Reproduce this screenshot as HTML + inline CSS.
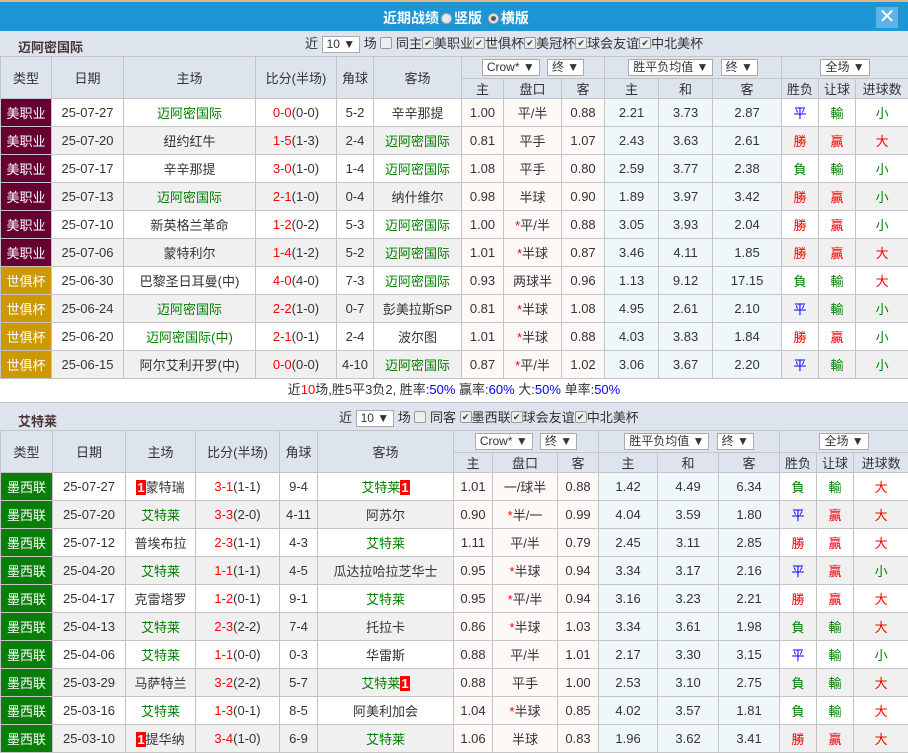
<!DOCTYPE html>
<html><head><meta charset="utf-8">
<style>
*{margin:0;padding:0;box-sizing:border-box}
body{width:908px;height:753px;overflow:hidden;background:#fff;font-family:"Liberation Sans","Noto Sans CJK SC",sans-serif;font-size:13px;color:#333;position:relative}
.title{position:absolute;left:0;top:0;width:908px;height:31px;background:#1d96d6;border-top:2px solid #d9b98a;color:#fff;font-weight:bold;font-size:14px}
.title .t{position:absolute;left:383px;top:6px;white-space:nowrap}
.radio{display:inline-block;width:11px;height:11px;border-radius:50%;background:#e8e8e8;border:1px solid #aaa;vertical-align:-1px;margin:0 2px}
.radio.on{background:radial-gradient(circle,#555 0,#555 2px,#e8e8e8 3px)}
.close{position:absolute;left:876px;top:5px;width:22px;height:21px;background:#5cb3e6;color:#fff;font-size:20px;line-height:20px;text-align:center;font-weight:normal}
.bar{position:absolute;left:0;width:908px;background:#dde4ee;border-bottom:1px solid #c0c0c0}
.bar .n{position:absolute;left:18px;font-weight:bold;color:#4a3333;font-size:13px}
.bar .c{position:absolute;white-space:nowrap;line-height:17px}
.sel{display:inline-block;background:#fff;border:1px solid #aaa;height:17px;line-height:15px;padding:0 4px;font-size:12px;vertical-align:middle}
.cb{display:inline-block;width:12px;height:12px;border:1px solid #999;border-radius:2px;background:#eee;vertical-align:middle;font-size:9px;line-height:10px;text-align:center;color:#333;margin-top:-4px}
table{position:absolute;left:0;border-collapse:collapse;table-layout:fixed;width:908px}
td{border:1px solid #c4c4c4;text-align:center;white-space:nowrap;overflow:hidden;padding:0}
tr.d td{height:28px}
tr.g td{background:#f0f0f0}
tr.h td{background:#dde4ee}
td.a{background:#fdf9f6 !important}
td.b{background:#eff7fb !important}
td.m{background:#660033 !important;color:#fff}
td.w{background:#cc9900 !important;color:#fff}
td.x{background:#0b7d0b !important;color:#fff}
.gr{color:#008000}.r{color:#f00}.bl{color:#00f}
.one{background:#f00;color:#fff;font-weight:bold;padding:0 1px}
.st{color:#f00}
.sum{position:absolute;left:0;top:377px;width:908px;height:26px;line-height:25px;text-align:center;border-bottom:1px solid #c0c0c0;padding-left:0}
</style></head><body>
<div class="title"><span class="t">近期战绩<span class="radio"></span>竖版 <span class="radio on"></span>横版</span><div class="close">✕</div></div>

<div class="bar" style="top:31px;height:26px"><span class="n" style="top:6px">迈阿密国际</span>
<span class="c" style="left:305px;top:4px">近 <span class="sel">10 ▼</span> 场 <span class="cb"></span> 同主<span class="cb">✔</span>美职业<span class="cb">✔</span>世俱杯<span class="cb">✔</span>美冠杯<span class="cb">✔</span>球会友谊<span class="cb">✔</span>中北美杯</span></div>

<table style="top:56px">
<colgroup><col style="width:51px"><col style="width:72px"><col style="width:132px"><col style="width:81px"><col style="width:37px"><col style="width:88px"><col style="width:42px"><col style="width:58px"><col style="width:43px"><col style="width:54px"><col style="width:54px"><col style="width:69px"><col style="width:37px"><col style="width:37px"><col style="width:53px"></colgroup>
<tr class="h"><td rowspan="2" style="height:38px">类型</td><td rowspan="2">日期</td><td rowspan="2">主场</td><td rowspan="2">比分(半场)</td><td rowspan="2">角球</td><td rowspan="2">客场</td><td colspan="3" style="height:22px"><span class="sel">Crow* ▼</span> &nbsp;<span class="sel">终 ▼</span></td><td colspan="3"><span class="sel">胜平负均值 ▼</span> &nbsp;<span class="sel">终 ▼</span></td><td colspan="3"><span class="sel">全场 ▼</span></td></tr>
<tr class="h"><td style="height:16px">主</td><td>盘口</td><td>客</td><td>主</td><td>和</td><td>客</td><td>胜负</td><td>让球</td><td>进球数</td></tr>
<tr class="d"><td class="m">美职业</td><td>25-07-27</td><td class="gr">迈阿密国际</td><td><span class="r">0-0</span>(0-0)</td><td>5-2</td><td>辛辛那提</td><td class="a">1.00</td><td class="a">平/半</td><td class="a">0.88</td><td class="b">2.21</td><td class="b">3.73</td><td class="b">2.87</td><td class="bl">平</td><td class="gr">輸</td><td class="gr">小</td></tr>
<tr class="d g"><td class="m">美职业</td><td>25-07-20</td><td>纽约红牛</td><td><span class="r">1-5</span>(1-3)</td><td>2-4</td><td class="gr">迈阿密国际</td><td class="a">0.81</td><td class="a">平手</td><td class="a">1.07</td><td class="b">2.43</td><td class="b">3.63</td><td class="b">2.61</td><td class="r">勝</td><td class="r">贏</td><td class="r">大</td></tr>
<tr class="d"><td class="m">美职业</td><td>25-07-17</td><td>辛辛那提</td><td><span class="r">3-0</span>(1-0)</td><td>1-4</td><td class="gr">迈阿密国际</td><td class="a">1.08</td><td class="a">平手</td><td class="a">0.80</td><td class="b">2.59</td><td class="b">3.77</td><td class="b">2.38</td><td class="gr">負</td><td class="gr">輸</td><td class="gr">小</td></tr>
<tr class="d g"><td class="m">美职业</td><td>25-07-13</td><td class="gr">迈阿密国际</td><td><span class="r">2-1</span>(1-0)</td><td>0-4</td><td>纳什维尔</td><td class="a">0.98</td><td class="a">半球</td><td class="a">0.90</td><td class="b">1.89</td><td class="b">3.97</td><td class="b">3.42</td><td class="r">勝</td><td class="r">贏</td><td class="gr">小</td></tr>
<tr class="d"><td class="m">美职业</td><td>25-07-10</td><td>新英格兰革命</td><td><span class="r">1-2</span>(0-2)</td><td>5-3</td><td class="gr">迈阿密国际</td><td class="a">1.00</td><td class="a"><span class="st">*</span>平/半</td><td class="a">0.88</td><td class="b">3.05</td><td class="b">3.93</td><td class="b">2.04</td><td class="r">勝</td><td class="r">贏</td><td class="gr">小</td></tr>
<tr class="d g"><td class="m">美职业</td><td>25-07-06</td><td>蒙特利尔</td><td><span class="r">1-4</span>(1-2)</td><td>5-2</td><td class="gr">迈阿密国际</td><td class="a">1.01</td><td class="a"><span class="st">*</span>半球</td><td class="a">0.87</td><td class="b">3.46</td><td class="b">4.11</td><td class="b">1.85</td><td class="r">勝</td><td class="r">贏</td><td class="r">大</td></tr>
<tr class="d"><td class="w">世俱杯</td><td>25-06-30</td><td>巴黎圣日耳曼(中)</td><td><span class="r">4-0</span>(4-0)</td><td>7-3</td><td class="gr">迈阿密国际</td><td class="a">0.93</td><td class="a">两球半</td><td class="a">0.96</td><td class="b">1.13</td><td class="b">9.12</td><td class="b">17.15</td><td class="gr">負</td><td class="gr">輸</td><td class="r">大</td></tr>
<tr class="d g"><td class="w">世俱杯</td><td>25-06-24</td><td class="gr">迈阿密国际</td><td><span class="r">2-2</span>(1-0)</td><td>0-7</td><td>彭美拉斯SP</td><td class="a">0.81</td><td class="a"><span class="st">*</span>半球</td><td class="a">1.08</td><td class="b">4.95</td><td class="b">2.61</td><td class="b">2.10</td><td class="bl">平</td><td class="gr">輸</td><td class="gr">小</td></tr>
<tr class="d"><td class="w">世俱杯</td><td>25-06-20</td><td class="gr">迈阿密国际(中)</td><td><span class="r">2-1</span>(0-1)</td><td>2-4</td><td>波尔图</td><td class="a">1.01</td><td class="a"><span class="st">*</span>半球</td><td class="a">0.88</td><td class="b">4.03</td><td class="b">3.83</td><td class="b">1.84</td><td class="r">勝</td><td class="r">贏</td><td class="gr">小</td></tr>
<tr class="d g"><td class="w">世俱杯</td><td>25-06-15</td><td>阿尔艾利开罗(中)</td><td><span class="r">0-0</span>(0-0)</td><td>4-10</td><td class="gr">迈阿密国际</td><td class="a">0.87</td><td class="a"><span class="st">*</span>平/半</td><td class="a">1.02</td><td class="b">3.06</td><td class="b">3.67</td><td class="b">2.20</td><td class="bl">平</td><td class="gr">輸</td><td class="gr">小</td></tr>
</table>

<div class="sum">近<span class="r">10</span>场,胜5平3负2, 胜率:<span class="bl">50%</span> 赢率:<span class="bl">60%</span> 大:<span class="bl">50%</span> 单率:<span class="bl">50%</span></div>

<div class="bar" style="top:403px;height:28px"><span class="n" style="top:8px">艾特莱</span>
<span class="c" style="left:339px;top:6px">近 <span class="sel">10 ▼</span> 场 <span class="cb"></span> 同客 <span class="cb">✔</span>墨西联<span class="cb">✔</span>球会友谊<span class="cb">✔</span>中北美杯</span></div>

<table style="top:430px">
<colgroup><col style="width:52px"><col style="width:73px"><col style="width:70px"><col style="width:84px"><col style="width:38px"><col style="width:136px"><col style="width:39px"><col style="width:65px"><col style="width:41px"><col style="width:59px"><col style="width:61px"><col style="width:61px"><col style="width:37px"><col style="width:37px"><col style="width:55px"></colgroup>
<tr class="h"><td rowspan="2" style="height:38px">类型</td><td rowspan="2">日期</td><td rowspan="2">主场</td><td rowspan="2">比分(半场)</td><td rowspan="2">角球</td><td rowspan="2">客场</td><td colspan="3" style="height:22px"><span class="sel">Crow* ▼</span> &nbsp;<span class="sel">终 ▼</span></td><td colspan="3"><span class="sel">胜平负均值 ▼</span> &nbsp;<span class="sel">终 ▼</span></td><td colspan="3"><span class="sel">全场 ▼</span></td></tr>
<tr class="h"><td style="height:16px">主</td><td>盘口</td><td>客</td><td>主</td><td>和</td><td>客</td><td>胜负</td><td>让球</td><td>进球数</td></tr>
<tr class="d"><td class="x">墨西联</td><td>25-07-27</td><td><span class="one">1</span>蒙特瑞</td><td><span class="r">3-1</span>(1-1)</td><td>9-4</td><td class="gr">艾特莱<span class="one">1</span></td><td class="a">1.01</td><td class="a">一/球半</td><td class="a">0.88</td><td class="b">1.42</td><td class="b">4.49</td><td class="b">6.34</td><td class="gr">負</td><td class="gr">輸</td><td class="r">大</td></tr>
<tr class="d g"><td class="x">墨西联</td><td>25-07-20</td><td class="gr">艾特莱</td><td><span class="r">3-3</span>(2-0)</td><td>4-11</td><td>阿苏尔</td><td class="a">0.90</td><td class="a"><span class="st">*</span>半/一</td><td class="a">0.99</td><td class="b">4.04</td><td class="b">3.59</td><td class="b">1.80</td><td class="bl">平</td><td class="r">贏</td><td class="r">大</td></tr>
<tr class="d"><td class="x">墨西联</td><td>25-07-12</td><td>普埃布拉</td><td><span class="r">2-3</span>(1-1)</td><td>4-3</td><td class="gr">艾特莱</td><td class="a">1.11</td><td class="a">平/半</td><td class="a">0.79</td><td class="b">2.45</td><td class="b">3.11</td><td class="b">2.85</td><td class="r">勝</td><td class="r">贏</td><td class="r">大</td></tr>
<tr class="d g"><td class="x">墨西联</td><td>25-04-20</td><td class="gr">艾特莱</td><td><span class="r">1-1</span>(1-1)</td><td>4-5</td><td>瓜达拉哈拉芝华士</td><td class="a">0.95</td><td class="a"><span class="st">*</span>半球</td><td class="a">0.94</td><td class="b">3.34</td><td class="b">3.17</td><td class="b">2.16</td><td class="bl">平</td><td class="r">贏</td><td class="gr">小</td></tr>
<tr class="d"><td class="x">墨西联</td><td>25-04-17</td><td>克雷塔罗</td><td><span class="r">1-2</span>(0-1)</td><td>9-1</td><td class="gr">艾特莱</td><td class="a">0.95</td><td class="a"><span class="st">*</span>平/半</td><td class="a">0.94</td><td class="b">3.16</td><td class="b">3.23</td><td class="b">2.21</td><td class="r">勝</td><td class="r">贏</td><td class="r">大</td></tr>
<tr class="d g"><td class="x">墨西联</td><td>25-04-13</td><td class="gr">艾特莱</td><td><span class="r">2-3</span>(2-2)</td><td>7-4</td><td>托拉卡</td><td class="a">0.86</td><td class="a"><span class="st">*</span>半球</td><td class="a">1.03</td><td class="b">3.34</td><td class="b">3.61</td><td class="b">1.98</td><td class="gr">負</td><td class="gr">輸</td><td class="r">大</td></tr>
<tr class="d"><td class="x">墨西联</td><td>25-04-06</td><td class="gr">艾特莱</td><td><span class="r">1-1</span>(0-0)</td><td>0-3</td><td>华雷斯</td><td class="a">0.88</td><td class="a">平/半</td><td class="a">1.01</td><td class="b">2.17</td><td class="b">3.30</td><td class="b">3.15</td><td class="bl">平</td><td class="gr">輸</td><td class="gr">小</td></tr>
<tr class="d g"><td class="x">墨西联</td><td>25-03-29</td><td>马萨特兰</td><td><span class="r">3-2</span>(2-2)</td><td>5-7</td><td class="gr">艾特莱<span class="one">1</span></td><td class="a">0.88</td><td class="a">平手</td><td class="a">1.00</td><td class="b">2.53</td><td class="b">3.10</td><td class="b">2.75</td><td class="gr">負</td><td class="gr">輸</td><td class="r">大</td></tr>
<tr class="d"><td class="x">墨西联</td><td>25-03-16</td><td class="gr">艾特莱</td><td><span class="r">1-3</span>(0-1)</td><td>8-5</td><td>阿美利加会</td><td class="a">1.04</td><td class="a"><span class="st">*</span>半球</td><td class="a">0.85</td><td class="b">4.02</td><td class="b">3.57</td><td class="b">1.81</td><td class="gr">負</td><td class="gr">輸</td><td class="r">大</td></tr>
<tr class="d g"><td class="x">墨西联</td><td>25-03-10</td><td><span class="one">1</span>提华纳</td><td><span class="r">3-4</span>(1-0)</td><td>6-9</td><td class="gr">艾特莱</td><td class="a">1.06</td><td class="a">半球</td><td class="a">0.83</td><td class="b">1.96</td><td class="b">3.62</td><td class="b">3.41</td><td class="r">勝</td><td class="r">贏</td><td class="r">大</td></tr>
</table>
</body></html>
